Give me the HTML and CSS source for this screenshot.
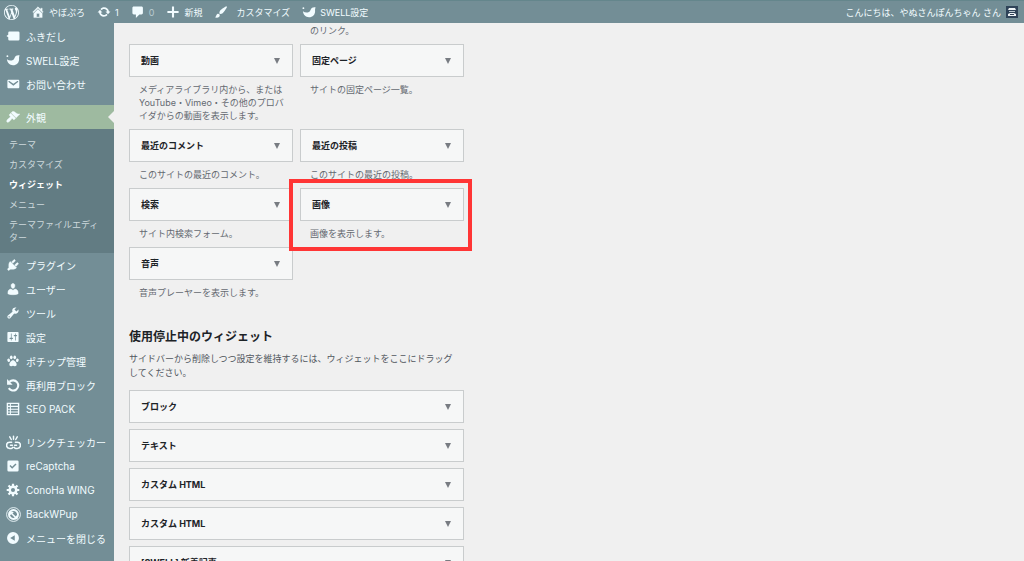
FILE: index.html
```html
<!DOCTYPE html>
<html lang="ja">
<head>
<meta charset="utf-8">
<title>ウィジェット</title>
<link rel="stylesheet" href="styles.css">
</head>
<body>
<svg class="sprite" aria-hidden="true">
  <symbol id="i-wp" viewBox="0 0 20 20"><path d="M20 10c0-5.51-4.49-10-10-10C4.48 0 0 4.49 0 10c0 5.52 4.48 10 10 10 5.51 0 10-4.48 10-10zM7.78 15.37L4.37 6.22c.55-.02 1.17-.08 1.17-.08.5-.06.44-1.13-.06-1.11 0 0-1.45.11-2.37.11-.18 0-.37 0-.58-.01C4.12 2.69 6.87 1.11 10 1.11c2.33 0 4.45.87 6.05 2.34-.68-.11-1.65.39-1.65 1.58 0 .74.45 1.36.9 2.1.35.61.55 1.36.55 2.46 0 1.49-1.4 5-1.4 5l-3.03-8.37c.54-.02.82-.17.82-.17.5-.05.44-1.25-.06-1.22 0 0-1.44.12-2.38.12-.87 0-2.33-.12-2.33-.12-.5-.03-.56 1.2-.06 1.22l.92.08 1.26 3.41zM17.41 10c.24-.64.74-1.87.43-4.25.7 1.29 1.05 2.71 1.05 4.25 0 3.29-1.73 6.24-4.4 7.78.97-2.59 1.94-5.2 2.92-7.78zM6.1 18.09C3.12 16.65 1.11 13.53 1.11 10c0-1.3.23-2.48.72-3.59C3.25 10.3 4.67 14.2 6.1 18.09zm4.03-6.63l2.58 6.98c-.86.29-1.76.45-2.71.45-.79 0-1.57-.11-2.29-.33.81-2.38 1.62-4.74 2.42-7.1z"/></symbol>
  <symbol id="i-home" viewBox="0 0 20 20"><path d="M16 8.5l1.53 1.53-1.06 1.06L10 4.6l-6.47 6.49-1.06-1.06L10 2.5l4 4v-2h2v4zm-6-2.46l6 5.99V18H4v-5.97zM12 17v-5H8v5h4z" stroke="currentColor" stroke-width=".5"/></symbol>
  <symbol id="i-update" viewBox="0 0 20 20"><path d="M10.2 3.28c3.53 0 6.43 2.61 6.92 6h2.08l-3.5 4-3.5-4h2.32c-.45-1.97-2.21-3.45-4.32-3.45-1.45 0-2.73.71-3.54 1.78L4.95 5.66C6.23 4.2 8.11 3.28 10.2 3.28zm-.4 13.44c-3.52 0-6.43-2.61-6.92-6H.8l3.5-4c1.17 1.33 2.33 2.67 3.5 4H5.48c.45 1.97 2.21 3.45 4.32 3.45 1.45 0 2.73-.71 3.54-1.78l1.71 1.95c-1.28 1.46-3.15 2.38-5.25 2.38z"/></symbol>
  <symbol id="i-comment" viewBox="0 0 20 20"><path d="M4 2h11c1.100 0 2 .9 2 2v7.500c0 1.100-.9 2-2 2h-3l-5 5v-5H4c-1.100 0-2-.9-2-2V4c0-1.100.9-2 2-2z"/></symbol>
  <symbol id="i-plus" viewBox="0 0 20 20"><path d="M18 8.500v3h-6.500V18h-3v-6.500H2v-3h6.500V2h3v6.500z"/></symbol>
  <symbol id="i-brush" viewBox="0 0 20 20"><path d="M18.330 3.570s.27-.8-.31-1.360c-.53-.52-1.220-.24-1.220-.24-.61.3-5.760 3.470-7.670 5.570-.86.96-2.060 3.790-1.090 4.820.92.98 3.960-.17 4.790-1 2.060-2.060 5.210-7.170 5.500-7.790zM1.400 17.650c2.370-1.560 1.460-3.410 3.230-4.640.93-.65 2.220-.62 3.080.29.63.67.8 2.570-.16 3.460-1.570 1.450-4 1.550-6.150.89z"/></symbol>
  <symbol id="i-swell" viewBox="0 0 20 20"><path d="M19.500 3.500c-3-.9-5.800.2-7 2.800-.9 2-1.600 3.800-4.300 4.300-2.600.5-5-.2-6.900-1.600C2 14 5.200 17.500 10 17.500c5.400 0 8.700-3.800 8.700-8.600 0-2.100-.3-3.700.8-5.400z"/><circle cx="2" cy="4.500" r="1.300"/></symbol>
  <symbol id="i-balloon" viewBox="0 0 20 20"><path d="M5 3.500h12.500A1.800 1.800 0 0 1 19.300 5.300v9.400a1.800 1.800 0 0 1-1.800 1.800H5a1.800 1.800 0 0 1-1.800-1.800v-3L.6 10l2.600-1.700v-3A1.800 1.800 0 0 1 5 3.500z"/></symbol>
  <symbol id="i-mail" viewBox="0 0 20 20"><path d="M3.870 4h13.250C18.370 4 19 4.590 19 5.790v8.420c0 1.190-.63 1.790-1.880 1.790H3.870c-1.250 0-1.880-.6-1.880-1.790V5.790c0-1.200.63-1.790 1.880-1.790zm6.620 8.600l6.740-5.530c.24-.2.43-.66.13-1.070-.29-.41-.82-.42-1.170-.17l-5.700 3.860L4.800 5.830c-.35-.25-.88-.24-1.170.17-.3.41-.11.87.13 1.070z"/></symbol>
  <symbol id="i-appearance" viewBox="0 0 20 20"><path d="M14.480 11.060L7.410 3.990l1.500-1.500c.5-.56 2.300-.47 3.510.32 1.210.8 1.430 1.280 2.910 2.100 1.180.64 2.450 1.260 4.450.85zm-.71.71L6.700 4.700 4.930 6.470c-.39.39-.39 1.020 0 1.410l1.060 1.060c.39.39.39 1.030 0 1.420-.6.6-1.430 1.110-2.210 1.690-.35.26-.7.53-1.010.84C1.430 14.230.4 16.080 1.400 17.070c.99 1 2.840-.03 4.180-1.360.31-.31.58-.66.85-1.020.57-.78 1.080-1.610 1.690-2.210.39-.39 1.020-.39 1.410 0l1.060 1.060c.39.39 1.020.39 1.410 0z" stroke="currentColor" stroke-width=".6"/></symbol>
  <symbol id="i-plugin" viewBox="0 0 20 20"><path d="M13.110 4.360L9.870 7.600 8 5.730l3.240-3.240c.35-.34 1.050-.2 1.560.32.52.51.66 1.210.31 1.550zm-8 1.770l.91-1.120 9.010 9.010-1.190.84c-.71.71-2.630 1.160-3.820 1.160H6.140L4.900 17.260c-.59.59-1.540.59-2.120 0-.59-.58-.59-1.530 0-2.120l1.240-1.240v-3.880c0-1.130.4-3.190 1.090-3.890zm7.260 3.970l3.240-3.240c.34-.35 1.040-.21 1.550.31.52.51.66 1.210.31 1.550l-3.240 3.250z" stroke="currentColor" stroke-width=".6"/></symbol>
  <symbol id="i-user" viewBox="0 0 20 20"><path d="M10 9.250c-2.270 0-2.730-3.440-2.730-3.440C7 4.020 7.820 2 9.970 2c2.160 0 2.980 2.020 2.710 3.810 0 0-.41 3.440-2.680 3.440zm0 2.570L12.720 10c2.390 0 4.520 2.330 4.520 4.530v2.490s-3.650 1.130-7.240 1.130c-3.650 0-7.240-1.130-7.240-1.130v-2.490c0-2.250 1.940-4.480 4.470-4.480z" stroke="currentColor" stroke-width=".6"/></symbol>
  <symbol id="i-tools" viewBox="0 0 20 20"><path d="M16.680 9.770c-1.340 1.340-3.300 1.670-4.950.99l-5.410 6.520c-.99.99-2.590.99-3.580 0s-.99-2.590 0-3.570l6.520-5.420c-.68-1.650-.35-3.610.99-4.950 1.280-1.280 3.120-1.620 4.720-1.060l-2.890 2.890 2.820 2.820 2.860-2.870c.53 1.580.18 3.390-1.080 4.650zM3.810 16.210c.4.39 1.040.39 1.430 0 .4-.4.4-1.040 0-1.430-.39-.4-1.030-.4-1.430 0-.39.39-.39 1.030 0 1.430z"/></symbol>
  <symbol id="i-settings" viewBox="0 0 20 20"><path d="M18 16V4c0-.55-.45-1-1-1H3c-.55 0-1 .45-1 1v12c0 .55.45 1 1 1h14c.55 0 1-.45 1-1zM8 11h1c.55 0 1 .45 1 1s-.45 1-1 1H8v1.500c0 .28-.22.5-.5.5s-.5-.22-.5-.5V13H6c-.55 0-1-.45-1-1s.45-1 1-1h1V5.500c0-.28.22-.5.5-.5s.5.22.5.5V11zm5-2h-1c-.55 0-1-.45-1-1s.45-1 1-1h1V5.500c0-.28.22-.5.5-.5s.5.22.5.5V7h1c.55 0 1 .45 1 1s-.45 1-1 1h-1v5.500c0 .28-.22.5-.5.5s-.5-.22-.5-.5V9z"/></symbol>
  <symbol id="i-paw" viewBox="0 0 20 20"><ellipse cx="3.800" cy="9" rx="1.900" ry="2.500" transform="rotate(-20 3.800 9)"/><ellipse cx="7.500" cy="4.800" rx="1.900" ry="2.700"/><ellipse cx="12.500" cy="4.800" rx="1.900" ry="2.700"/><ellipse cx="16.200" cy="9" rx="1.900" ry="2.500" transform="rotate(20 16.200 9)"/><path d="M10 9c2.500 0 5.200 3.700 5.200 6 0 1.700-1.200 2.600-2.700 2.400-1-.2-1.600-.7-2.500-.7s-1.500.5-2.500.7c-1.500.2-2.700-.7-2.700-2.400C4.800 12.700 7.500 9 10 9z"/></symbol>
  <symbol id="i-undo" viewBox="0 0 20 20"><path d="M5 5.500A7.300 7.300 0 1 1 4 14.500" fill="none" stroke="currentColor" stroke-width="3"/><path d="M1.500 1.500v8h8z"/></symbol>
  <symbol id="i-table" viewBox="0 0 20 20"><path fill-rule="evenodd" d="M1 1h18v18H1zM3 3v2.500h2.500V3zm4 0v2.500h10V3zM3 7v2.500h2.500V7zm4 0v2.500h10V7zm-4 4v2.500h2.500V11zm4 0v2.500h10V11zm-4 4v2.300h2.500V15zm4 0v2.300h10V15z"/></symbol>
  <symbol id="i-unlink" viewBox="0 0 20 20"><g fill="none" stroke="currentColor" stroke-width="2" stroke-linecap="round"><path d="M7.500 9.500H5a4 4 0 0 0 0 8.500h2a3 3 0 0 0 2-1.500M12.500 9.500H15a4 4 0 0 1 0 8.500h-2a3 3 0 0 1-2-1.500M6 13.800h2.500M11.500 13.800H14M10 1.500v4M5 2.500l2 3.500M15 2.500l-2 3.500"/></g></symbol>
  <symbol id="i-check" viewBox="0 0 20 20"><path fill-rule="evenodd" d="M4 2h12a2 2 0 0 1 2 2v12a2 2 0 0 1-2 2H4a2 2 0 0 1-2-2V4a2 2 0 0 1 2-2zm1 8l3.800 4L15 7.800 13.500 6.300 8.800 11 6.500 8.600z"/></symbol>
  <symbol id="i-gear" viewBox="0 0 20 20"><circle cx="10" cy="10" r="4.700" fill="none" stroke="currentColor" stroke-width="3.600"/><path d="M10 1v4M10 15v4M1 10h4M15 10h4M3.600 3.600l2.900 2.900M13.500 13.500l2.900 2.900M3.600 16.400l2.900-2.900M13.500 6.500l2.900-2.900" stroke="currentColor" stroke-width="3.200"/></symbol>
  <symbol id="i-backup" viewBox="0 0 20 20"><circle cx="10" cy="10" r="9.200" fill="none" stroke="currentColor" stroke-width="1.200"/><circle cx="10" cy="10" r="6" fill="none" stroke="currentColor" stroke-width="2.600"/><path d="M4.500 5.500l6 1-1.800 2 4.500 4 1.500-1.700 1 6-6-.8 1.800-2-4.500-4.300L5.300 11z"/></symbol>
  <symbol id="i-collapse" viewBox="0 0 20 20"><path fill-rule="evenodd" d="M10 1.500a8.500 8.500 0 1 1 0 17 8.500 8.500 0 0 1 0-17zM12.500 6L6 10l6.500 4z"/></symbol>
  <symbol id="i-down" viewBox="0 0 6 6"><path d="M0 0h6L3 6z"/></symbol>
</svg>

<header class="bar">
  <nav class="bar-links">
    <a class="bar-logo" href="#" aria-label="WordPress"><svg class="icon icon-lg"><use href="#i-wp"/></svg></a>
    <a class="bar-link" href="#"><svg class="icon"><use href="#i-home"/></svg>やぼぷろ</a>
    <a class="bar-link" href="#"><svg class="icon"><use href="#i-update"/></svg>1</a>
    <a class="bar-link" href="#"><svg class="icon"><use href="#i-comment"/></svg><span class="dim">0</span></a>
    <a class="bar-link" href="#"><svg class="icon"><use href="#i-plus"/></svg>新規</a>
    <a class="bar-link wide" href="#"><svg class="icon"><use href="#i-brush"/></svg>カスタマイズ</a>
    <a class="bar-link" href="#"><svg class="icon"><use href="#i-swell"/></svg>SWELL設定</a>
  </nav>
  <a class="account" href="#">こんにちは、やぬさんぽんちゃん さん
    <svg class="avatar" viewBox="0 0 12 12"><rect width="12" height="12" fill="#2f4358"/><path d="M3 2h6l1 2H2z" fill="#eef3f5"/><path d="M3 5h6v1H3z" fill="#b9c6ce"/><path d="M2 8l2-1h4l2 1v2H2z" fill="#eef3f5"/><path d="M4 8h4v1H4z" fill="#2f4358"/></svg>
  </a>
</header>

<div class="layout">
  <nav class="side">
    <ul class="menu">
      <li><a class="item" href="#"><svg class="icon"><use href="#i-balloon"/></svg>ふきだし</a></li>
      <li><a class="item" href="#"><svg class="icon"><use href="#i-swell"/></svg>SWELL設定</a></li>
      <li><a class="item" href="#"><svg class="icon"><use href="#i-mail"/></svg>お問い合わせ</a></li>
    </ul>
    <a class="item current" href="#"><svg class="icon"><use href="#i-appearance"/></svg>外観</a>
    <ul class="submenu">
      <li><a href="#">テーマ</a></li>
      <li><a href="#">カスタマイズ</a></li>
      <li><a class="active" href="#">ウィジェット</a></li>
      <li><a href="#">メニュー</a></li>
      <li><a href="#">テーマファイルエディター</a></li>
    </ul>
    <ul class="menu">
      <li><a class="item" href="#"><svg class="icon"><use href="#i-plugin"/></svg>プラグイン</a></li>
      <li><a class="item" href="#"><svg class="icon"><use href="#i-user"/></svg>ユーザー</a></li>
      <li><a class="item" href="#"><svg class="icon"><use href="#i-tools"/></svg>ツール</a></li>
      <li><a class="item" href="#"><svg class="icon"><use href="#i-settings"/></svg>設定</a></li>
      <li><a class="item" href="#"><svg class="icon"><use href="#i-paw"/></svg>ポチップ管理</a></li>
      <li><a class="item" href="#"><svg class="icon"><use href="#i-undo"/></svg>再利用ブロック</a></li>
      <li><a class="item" href="#"><svg class="icon"><use href="#i-table"/></svg>SEO PACK</a></li>
    </ul>
    <ul class="menu">
      <li><a class="item" href="#"><svg class="icon icon-lg"><use href="#i-unlink"/></svg>リンクチェッカー</a></li>
      <li><a class="item" href="#"><svg class="icon"><use href="#i-check"/></svg>reCaptcha</a></li>
      <li><a class="item" href="#"><svg class="icon"><use href="#i-gear"/></svg>ConoHa WING</a></li>
      <li><a class="item" href="#"><svg class="icon icon-lg"><use href="#i-backup"/></svg>BackWPup</a></li>
      <li><button class="item" type="button"><svg class="icon"><use href="#i-collapse"/></svg>メニューを閉じる</button></li>
    </ul>
  </nav>

  <main class="main">
    <section class="available">
      <div class="widget first"><p class="desc">のリンク。</p></div>
      <div class="widget"><button class="box" type="button">動画<svg class="arrow"><use href="#i-down"/></svg></button><p class="desc">メディアライブラリ内から、または YouTube・Vimeo・その他のプロバイダからの動画を表示します。</p></div>
      <div class="widget"><button class="box" type="button">固定ページ<svg class="arrow"><use href="#i-down"/></svg></button><p class="desc">サイトの固定ページ一覧。</p></div>
      <div class="widget"><button class="box" type="button">最近のコメント<svg class="arrow"><use href="#i-down"/></svg></button><p class="desc">このサイトの最近のコメント。</p></div>
      <div class="widget"><button class="box" type="button">最近の投稿<svg class="arrow"><use href="#i-down"/></svg></button><p class="desc">このサイトの最近の投稿。</p></div>
      <div class="widget"><button class="box" type="button">検索<svg class="arrow"><use href="#i-down"/></svg></button><p class="desc">サイト内検索フォーム。</p></div>
      <div class="widget marked"><button class="box" type="button">画像<svg class="arrow"><use href="#i-down"/></svg></button><p class="desc">画像を表示します。</p></div>
      <div class="widget"><button class="box" type="button">音声<svg class="arrow"><use href="#i-down"/></svg></button><p class="desc">音声プレーヤーを表示します。</p></div>
    </section>

    <section class="inactive">
      <h2>使用停止中のウィジェット</h2>
      <p class="lead">サイドバーから削除しつつ設定を維持するには、ウィジェットをここにドラッグしてください。</p>
      <div class="stack">
        <button class="box" type="button">ブロック<svg class="arrow"><use href="#i-down"/></svg></button>
        <button class="box" type="button">テキスト<svg class="arrow"><use href="#i-down"/></svg></button>
        <button class="box" type="button">カスタム HTML<svg class="arrow"><use href="#i-down"/></svg></button>
        <button class="box" type="button">カスタム HTML<svg class="arrow"><use href="#i-down"/></svg></button>
        <button class="box" type="button">[SWELL] 新着記事<svg class="arrow"><use href="#i-down"/></svg></button>
      </div>
    </section>
  </main>
</div>
</body>
</html>
```
FILE: styles.css
```css
* { box-sizing: border-box; }

body {
  margin: 0;
  height: 100vh;
  overflow: hidden;
  display: flex;
  flex-direction: column;
  background: #f0f0f0;
  color: #1d2327;
  font-family: Inter, "Noto Sans CJK JP", sans-serif;
  font-size: 9px;
}

h2, p, ul { margin: 0; padding: 0; }
ul { list-style: none; }
a { color: inherit; text-decoration: none; }
button { font: inherit; color: inherit; cursor: pointer; }

.sprite { display: none; }

.icon {
  flex: none;
  width: 14px;
  height: 14px;
  fill: currentColor;
}
.icon-lg { width: 15px; height: 15px; }

/* Admin bar */
.bar {
  flex: none;
  display: flex;
  justify-content: space-between;
  align-items: center;
  height: 23px;
  padding: 0 6px 0 4px;
  border-top: 1px solid #64868c;
  background: #738e96;
  color: #f2fcff;
}
.bar-links { display: flex; align-items: center; gap: 12px; }
.bar-logo { display: flex; }
.bar-link { display: flex; align-items: center; gap: 4px; }
.bar-link.wide { gap: 8px; }
.dim { color: #b9cbd0; }
.account { display: flex; align-items: center; gap: 5px; }
.avatar { width: 12px; height: 12px; }

/* Side menu */
.layout { flex: 1; min-height: 0; display: flex; }
.side {
  flex: none;
  width: 114px;
  padding-top: 1px;
  background: #738e96;
  color: #f2fcff;
}
.menu { padding-bottom: 9px; }
.item {
  display: flex;
  align-items: center;
  gap: 6px;
  width: 100%;
  height: 24px;
  padding: 0 6px;
  border: 0;
  background: none;
  font-size: 10px;
  white-space: nowrap;
}
.item .icon-lg { margin-right: -1px; }
.item.current { position: relative; background: #9ebaa0; }
.item.current::after {
  content: "";
  position: absolute;
  right: 0;
  top: 6px;
  border: 6px solid transparent;
  border-left-width: 0;
  border-right-color: #f0f0f0;
}
.submenu {
  padding: 6px 0 5px;
  background: #627c83;
  color: #cdd9dc;
}
.submenu a {
  display: block;
  padding: 3px 8px 4px 9px;
  line-height: 13px;
}
.submenu .active { color: #fff; font-weight: 700; }

/* Widgets */
.main { flex: 1; min-width: 0; padding: 1px 15px 0; }
.available, .inactive { max-width: 335px; }
.available {
  display: grid;
  grid-template-columns: 1fr 1fr;
  column-gap: 7px;
}
.widget.first { grid-column: 2; }
.widget.first .desc { padding-top: 0; }
.box {
  display: flex;
  justify-content: space-between;
  align-items: center;
  width: 100%;
  height: 33px;
  padding: 0 12px 0 11px;
  border: 1px solid #c9cccd;
  background: #f6f7f7;
  font-weight: 700;
  text-align: left;
}
.arrow { width: 6px; height: 6px; fill: #787c82; }
.desc {
  padding: 6px 7px 7px 10px;
  color: #646970;
  line-height: 13px;
}
.marked { position: relative; }
.marked::after {
  content: "";
  position: absolute;
  inset: -9px -8px -4px -11px;
  border: 4px solid #ff3535;
}

.inactive { padding-top: 22px; }
.inactive h2 { font-size: 12px; line-height: 18px; }
.lead {
  padding: 6px 8px 10px 0;
  color: #50575e;
  line-height: 14px;
}
.stack { display: flex; flex-direction: column; gap: 6px; }
```
